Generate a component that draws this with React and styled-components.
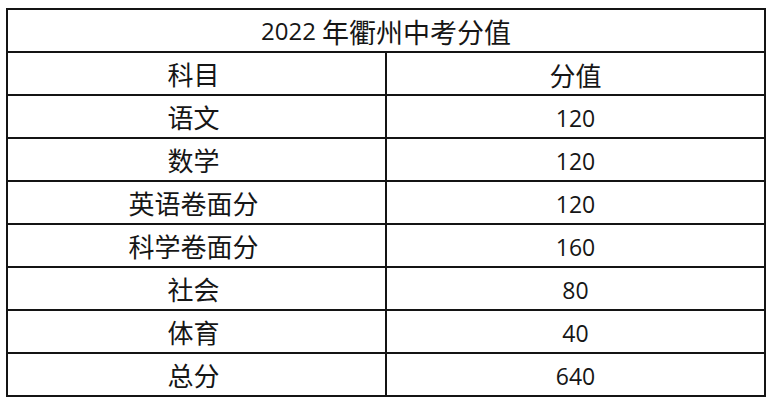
import React from 'react';
import styled, { createGlobalStyle } from 'styled-components';

const GlobalStyle = createGlobalStyle`
    body {
        margin: 0;
        background: #ffffff;
        font-family: "Noto Sans CJK SC", sans-serif;
        color: #161616;
    }
`;

const rows = [
    { subject: '语文', score: '120' },
    { subject: '数学', score: '120' },
    { subject: '英语卷面分', score: '120' },
    { subject: '科学卷面分', score: '160' },
    { subject: '社会', score: '80' },
    { subject: '体育', score: '40' },
    { subject: '总分', score: '640' },
];

const App = () => {
    return (
        <>
            <GlobalStyle />
            <Page>
                <ScoreTable>
                    <TitleCell>
                        <Num size={24}>2022</Num>&nbsp;年衢州中考分值
                    </TitleCell>
                    <SubjectCell>科目</SubjectCell>
                    <ScoreCell>分值</ScoreCell>
                    {rows.map(row => (
                        <React.Fragment key={row.subject}>
                            <SubjectCell>{row.subject}</SubjectCell>
                            <ScoreCell>
                                <Num size={23}>{row.score}</Num>
                            </ScoreCell>
                        </React.Fragment>
                    ))}
                </ScoreTable>
            </Page>
        </>
    );
}

export default App;

const Page = styled.div`
    box-sizing: border-box;
    width: 774px;
    height: 404px;
    padding: 8px 0 0 6px;
`;

const ScoreTable = styled.div`
    display: grid;
    grid-template-columns: 379px 379px;
    grid-auto-rows: 43px;
    width: 758px;
    border-top: 2px solid #141414;
    border-left: 2px solid #141414;
`;

const Cell = styled.div`
    box-sizing: border-box;
    display: flex;
    align-items: center;
    justify-content: center;
    border-right: 2px solid #141414;
    border-bottom: 2px solid #141414;
    font-size: 26px;
    line-height: 1;
    white-space: nowrap;
`;

const TitleCell = styled(Cell)`
    grid-column: 1 / span 2;
    font-size: 27px;
    padding-top: 1px;
`;

const SubjectCell = styled(Cell)`
    padding-right: 6px;
`;

const ScoreCell = styled(Cell)`
    padding-top: 3px;
`;

const Num = styled.span`
    font-family: "Open Sans", sans-serif;
    font-size: ${props => props.size}px;
`;
